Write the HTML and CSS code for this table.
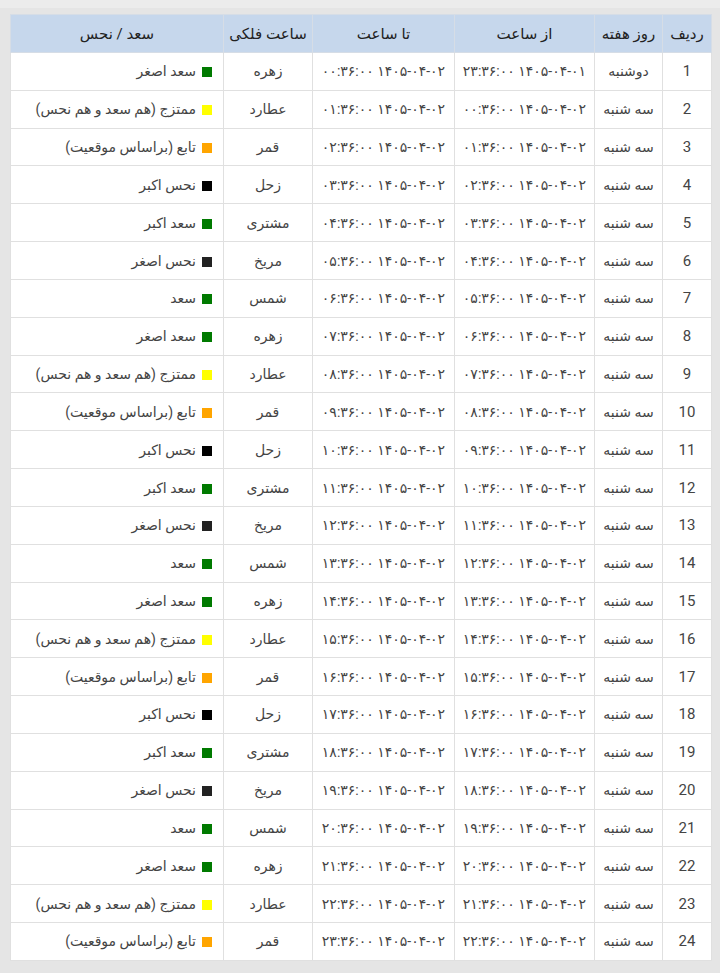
FILE: index.html
```html
<!DOCTYPE html>
<html lang="fa" dir="rtl">
<head>
<meta charset="utf-8">
<title>ساعات سعد و نحس</title>
<link rel="stylesheet" href="styles.css">
</head>
<body>
<div class="page">
<table class="hours">
<colgroup>
<col class="c-radif"><col class="c-day"><col class="c-from"><col class="c-to"><col class="c-planet"><col class="c-status">
</colgroup>
<thead>
<tr><th>ردیف</th><th>روز هفته</th><th>از ساعت</th><th>تا ساعت</th><th>ساعت فلکی</th><th>سعد / نحس</th></tr>
</thead>
<tbody>
<tr><td class="num">1</td><td>دوشنبه</td><td>۱۴۰۵-۰۴-۰۱ ۲۳:۳۶:۰۰</td><td>۱۴۰۵-۰۴-۰۲ ۰۰:۳۶:۰۰</td><td>زهره</td><td class="st"><span class="sq green"></span>سعد اصغر</td></tr>
<tr><td class="num">2</td><td>سه شنبه</td><td>۱۴۰۵-۰۴-۰۲ ۰۰:۳۶:۰۰</td><td>۱۴۰۵-۰۴-۰۲ ۰۱:۳۶:۰۰</td><td>عطارد</td><td class="st"><span class="sq yellow"></span>ممتزج (هم سعد و هم نحس)</td></tr>
<tr><td class="num">3</td><td>سه شنبه</td><td>۱۴۰۵-۰۴-۰۲ ۰۱:۳۶:۰۰</td><td>۱۴۰۵-۰۴-۰۲ ۰۲:۳۶:۰۰</td><td>قمر</td><td class="st"><span class="sq orange"></span>تابع (براساس موقعیت)</td></tr>
<tr><td class="num">4</td><td>سه شنبه</td><td>۱۴۰۵-۰۴-۰۲ ۰۲:۳۶:۰۰</td><td>۱۴۰۵-۰۴-۰۲ ۰۳:۳۶:۰۰</td><td>زحل</td><td class="st"><span class="sq black"></span>نحس اکبر</td></tr>
<tr><td class="num">5</td><td>سه شنبه</td><td>۱۴۰۵-۰۴-۰۲ ۰۳:۳۶:۰۰</td><td>۱۴۰۵-۰۴-۰۲ ۰۴:۳۶:۰۰</td><td>مشتری</td><td class="st"><span class="sq green"></span>سعد اکبر</td></tr>
<tr><td class="num">6</td><td>سه شنبه</td><td>۱۴۰۵-۰۴-۰۲ ۰۴:۳۶:۰۰</td><td>۱۴۰۵-۰۴-۰۲ ۰۵:۳۶:۰۰</td><td>مریخ</td><td class="st"><span class="sq dark"></span>نحس اصغر</td></tr>
<tr><td class="num">7</td><td>سه شنبه</td><td>۱۴۰۵-۰۴-۰۲ ۰۵:۳۶:۰۰</td><td>۱۴۰۵-۰۴-۰۲ ۰۶:۳۶:۰۰</td><td>شمس</td><td class="st"><span class="sq green"></span>سعد</td></tr>
<tr><td class="num">8</td><td>سه شنبه</td><td>۱۴۰۵-۰۴-۰۲ ۰۶:۳۶:۰۰</td><td>۱۴۰۵-۰۴-۰۲ ۰۷:۳۶:۰۰</td><td>زهره</td><td class="st"><span class="sq green"></span>سعد اصغر</td></tr>
<tr><td class="num">9</td><td>سه شنبه</td><td>۱۴۰۵-۰۴-۰۲ ۰۷:۳۶:۰۰</td><td>۱۴۰۵-۰۴-۰۲ ۰۸:۳۶:۰۰</td><td>عطارد</td><td class="st"><span class="sq yellow"></span>ممتزج (هم سعد و هم نحس)</td></tr>
<tr><td class="num">10</td><td>سه شنبه</td><td>۱۴۰۵-۰۴-۰۲ ۰۸:۳۶:۰۰</td><td>۱۴۰۵-۰۴-۰۲ ۰۹:۳۶:۰۰</td><td>قمر</td><td class="st"><span class="sq orange"></span>تابع (براساس موقعیت)</td></tr>
<tr><td class="num">11</td><td>سه شنبه</td><td>۱۴۰۵-۰۴-۰۲ ۰۹:۳۶:۰۰</td><td>۱۴۰۵-۰۴-۰۲ ۱۰:۳۶:۰۰</td><td>زحل</td><td class="st"><span class="sq black"></span>نحس اکبر</td></tr>
<tr><td class="num">12</td><td>سه شنبه</td><td>۱۴۰۵-۰۴-۰۲ ۱۰:۳۶:۰۰</td><td>۱۴۰۵-۰۴-۰۲ ۱۱:۳۶:۰۰</td><td>مشتری</td><td class="st"><span class="sq green"></span>سعد اکبر</td></tr>
<tr><td class="num">13</td><td>سه شنبه</td><td>۱۴۰۵-۰۴-۰۲ ۱۱:۳۶:۰۰</td><td>۱۴۰۵-۰۴-۰۲ ۱۲:۳۶:۰۰</td><td>مریخ</td><td class="st"><span class="sq dark"></span>نحس اصغر</td></tr>
<tr><td class="num">14</td><td>سه شنبه</td><td>۱۴۰۵-۰۴-۰۲ ۱۲:۳۶:۰۰</td><td>۱۴۰۵-۰۴-۰۲ ۱۳:۳۶:۰۰</td><td>شمس</td><td class="st"><span class="sq green"></span>سعد</td></tr>
<tr><td class="num">15</td><td>سه شنبه</td><td>۱۴۰۵-۰۴-۰۲ ۱۳:۳۶:۰۰</td><td>۱۴۰۵-۰۴-۰۲ ۱۴:۳۶:۰۰</td><td>زهره</td><td class="st"><span class="sq green"></span>سعد اصغر</td></tr>
<tr><td class="num">16</td><td>سه شنبه</td><td>۱۴۰۵-۰۴-۰۲ ۱۴:۳۶:۰۰</td><td>۱۴۰۵-۰۴-۰۲ ۱۵:۳۶:۰۰</td><td>عطارد</td><td class="st"><span class="sq yellow"></span>ممتزج (هم سعد و هم نحس)</td></tr>
<tr><td class="num">17</td><td>سه شنبه</td><td>۱۴۰۵-۰۴-۰۲ ۱۵:۳۶:۰۰</td><td>۱۴۰۵-۰۴-۰۲ ۱۶:۳۶:۰۰</td><td>قمر</td><td class="st"><span class="sq orange"></span>تابع (براساس موقعیت)</td></tr>
<tr><td class="num">18</td><td>سه شنبه</td><td>۱۴۰۵-۰۴-۰۲ ۱۶:۳۶:۰۰</td><td>۱۴۰۵-۰۴-۰۲ ۱۷:۳۶:۰۰</td><td>زحل</td><td class="st"><span class="sq black"></span>نحس اکبر</td></tr>
<tr><td class="num">19</td><td>سه شنبه</td><td>۱۴۰۵-۰۴-۰۲ ۱۷:۳۶:۰۰</td><td>۱۴۰۵-۰۴-۰۲ ۱۸:۳۶:۰۰</td><td>مشتری</td><td class="st"><span class="sq green"></span>سعد اکبر</td></tr>
<tr><td class="num">20</td><td>سه شنبه</td><td>۱۴۰۵-۰۴-۰۲ ۱۸:۳۶:۰۰</td><td>۱۴۰۵-۰۴-۰۲ ۱۹:۳۶:۰۰</td><td>مریخ</td><td class="st"><span class="sq dark"></span>نحس اصغر</td></tr>
<tr><td class="num">21</td><td>سه شنبه</td><td>۱۴۰۵-۰۴-۰۲ ۱۹:۳۶:۰۰</td><td>۱۴۰۵-۰۴-۰۲ ۲۰:۳۶:۰۰</td><td>شمس</td><td class="st"><span class="sq green"></span>سعد</td></tr>
<tr><td class="num">22</td><td>سه شنبه</td><td>۱۴۰۵-۰۴-۰۲ ۲۰:۳۶:۰۰</td><td>۱۴۰۵-۰۴-۰۲ ۲۱:۳۶:۰۰</td><td>زهره</td><td class="st"><span class="sq green"></span>سعد اصغر</td></tr>
<tr><td class="num">23</td><td>سه شنبه</td><td>۱۴۰۵-۰۴-۰۲ ۲۱:۳۶:۰۰</td><td>۱۴۰۵-۰۴-۰۲ ۲۲:۳۶:۰۰</td><td>عطارد</td><td class="st"><span class="sq yellow"></span>ممتزج (هم سعد و هم نحس)</td></tr>
<tr><td class="num">24</td><td>سه شنبه</td><td>۱۴۰۵-۰۴-۰۲ ۲۲:۳۶:۰۰</td><td>۱۴۰۵-۰۴-۰۲ ۲۳:۳۶:۰۰</td><td>قمر</td><td class="st"><span class="sq orange"></span>تابع (براساس موقعیت)</td></tr>
</tbody>
</table>
</div>
</body>
</html>
```
FILE: styles.css
```css
html, body {
  margin: 0;
  padding: 0;
  background: #ececec;
}
body {
  font-family: Roboto, "DejaVu Sans", sans-serif;
  font-size: 14px;
  color: #444;
}
.page {
  margin-top: 8px;
  background: #e5e5e5;
  padding: 6px 8px 13px 11px;
}
.hours {
  width: 701px;
  border-collapse: collapse;
  table-layout: fixed;
  background: #fff;
}
.c-radif { width: 49px; }
.c-day { width: 68px; }
.c-from { width: 140px; }
.c-to { width: 142px; }
.c-planet { width: 89px; }
.c-status { width: 213px; }
.hours th {
  background: #c6d7ec;
  color: #222;
  font-weight: normal;
  font-size: 15px;
  height: 37px;
  padding: 0 2px;
  border: 1px solid #d6dde6;
  text-align: center;
  white-space: nowrap;
}
.hours td {
  height: 36.83px;
  padding: 0 4px;
  border: 1px solid #e0e0e0;
  text-align: center;
  white-space: nowrap;
}
.hours td.num {
  font-size: 15px;
}
.hours td.st {
  text-align: right;
  padding-right: 11px;
}
.sq {
  display: inline-block;
  width: 10px;
  height: 10px;
  margin-left: 6px;
  vertical-align: -1px;
}
.green { background: #007a00; }
.yellow { background: #ffff00; }
.orange { background: #ffa500; }
.black { background: #000; }
.dark { background: #222; }
```
